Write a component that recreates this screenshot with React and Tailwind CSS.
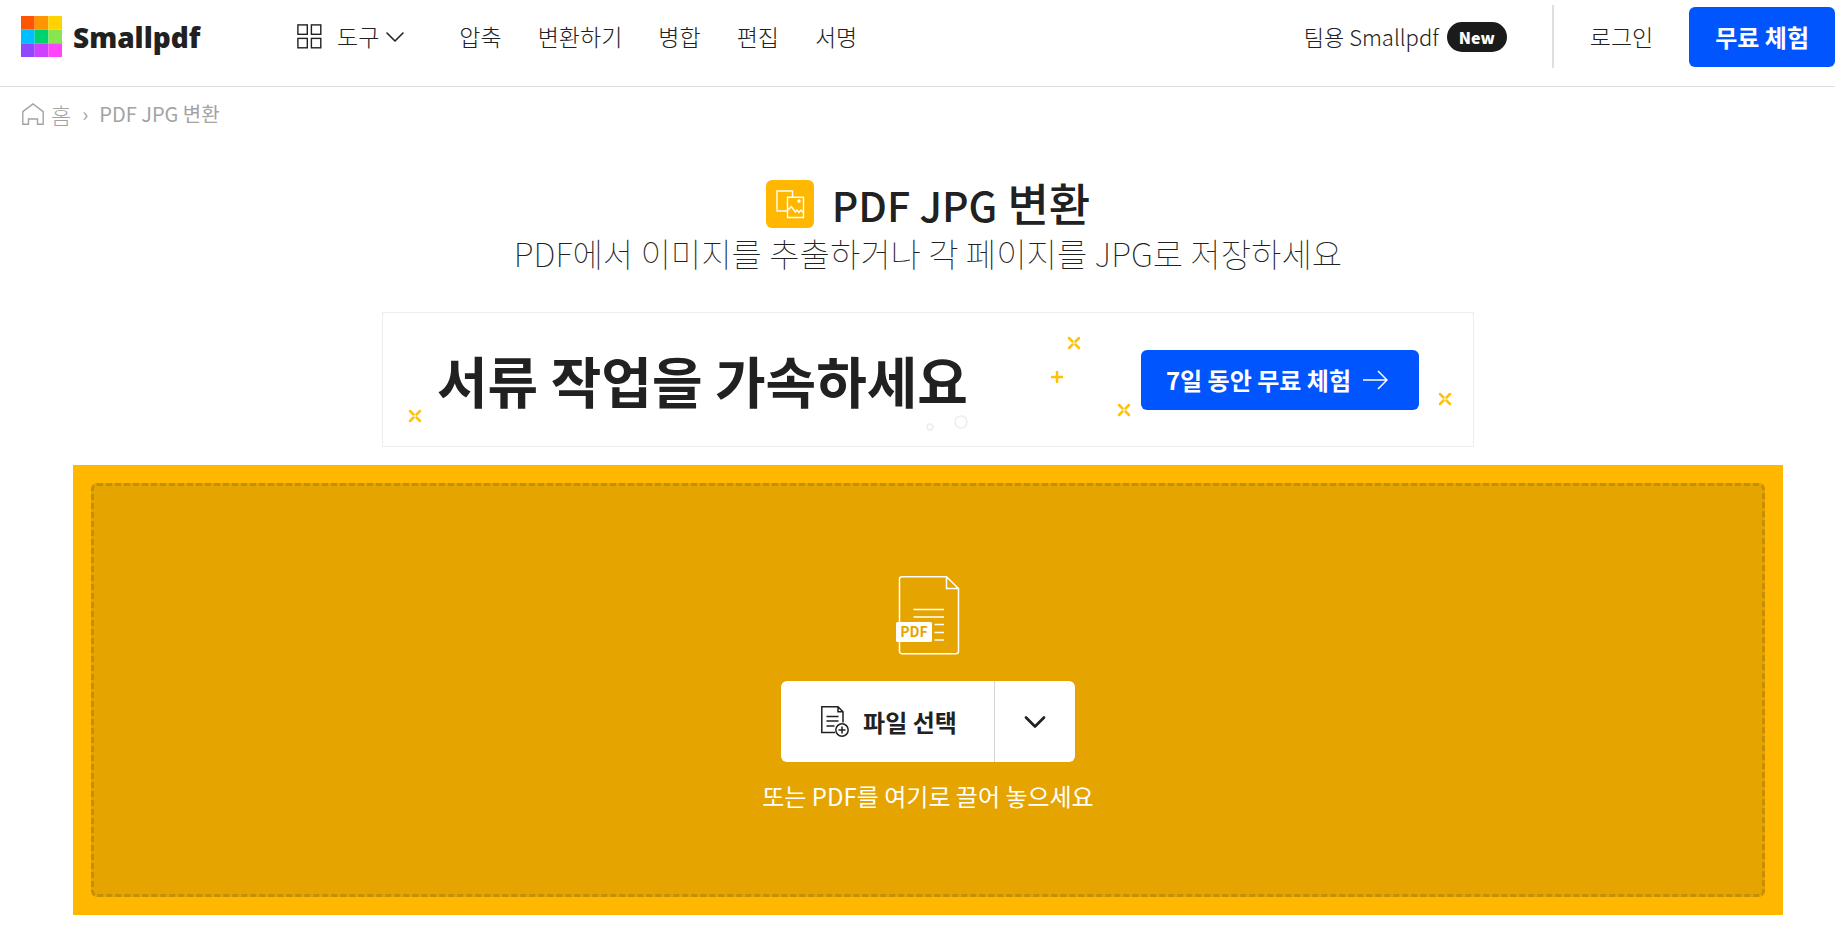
import { ChevronDown } from 'lucide-react';

const NAV_LINKS = ['압축', '변환하기', '병합', '편집', '서명'];

const LOGO_TILES = [
  ['#ff5500', '#ff9500', '#ffd200'],
  ['#00beff', '#00d26e', '#87e650'],
  ['#9146ff', '#cd41ff', '#ff46fa'],
];

// sparkles around the promo banner, in banner coordinates
const SPARKS = [
  { x: 32, y: 103 },
  { x: 691, y: 30 },
  { x: 741, y: 97 },
  { x: 1062, y: 86 },
];

function Logo() {
  return (
    <a href="#" className="flex w-[276px] shrink-0 items-center gap-[11px]">
      <svg width="41" height="41" viewBox="0 0 42 42" aria-hidden="true">
        {LOGO_TILES.map((row, r) =>
          row.map((fill, c) => <rect key={fill} x={c * 14} y={r * 14} width="14" height="14" fill={fill} />)
        )}
      </svg>
      <span className="font-['Open_Sans',sans-serif] text-[28px] leading-none font-extrabold">Smallpdf</span>
    </a>
  );
}

function GridIcon() {
  return (
    <svg width="25" height="25" viewBox="0 0 25 25" fill="none" stroke="currentColor" strokeWidth="1.4" aria-hidden="true">
      <rect x="0.9" y="0.9" width="9.4" height="9.4" />
      <rect x="14.4" y="0.9" width="9.4" height="9.4" />
      <rect x="0.9" y="14.4" width="9.4" height="9.4" />
      <rect x="14.4" y="14.4" width="9.4" height="9.4" />
    </svg>
  );
}

function HomeIcon() {
  return (
    <svg width="22" height="22" viewBox="0 0 22 22" fill="none" stroke="currentColor" strokeWidth="1.4" aria-hidden="true">
      <path d="M.8 8.600 11 .9l10.200 7.700v12.600h-5.700v-5.200h-9v5.200H.8z" />
    </svg>
  );
}

function ArrowIcon() {
  return (
    <svg width="25" height="20" viewBox="0 0 25 20" fill="none" stroke="currentColor" strokeWidth="1.5" aria-hidden="true">
      <path d="M0 10h24M15 1l9 9-9 9" />
    </svg>
  );
}

function ToolIcon() {
  return (
    <svg width="48" height="48" viewBox="0 0 48 48" fill="none" stroke="#fff" strokeWidth="1.4" aria-hidden="true">
      <rect width="48" height="48" rx="6" fill="#ffb700" stroke="none" />
      <path d="M21.500 31H11V11h15.500v6M21.500 17.200h16v20.300h-16zM21.500 30.500l3.900-4 4 5.500 1.600-2 2 2.500 2-2.500 2.500 3" />
      <circle cx="33" cy="21" r="1.700" fill="#fff" stroke="none" />
    </svg>
  );
}

function PdfFileIcon() {
  return (
    <svg width="64" height="79" viewBox="0 0 64 79" fill="none" stroke="#fff" strokeWidth="1.5" aria-hidden="true">
      <path d="M50.500 .8H6A2.500 2.500 0 0 0 3.500 3.300v71.900A2.500 2.500 0 0 0 6 77.700h54a2.500 2.500 0 0 0 2.500-2.500V12.500zV12.500h12" />
      <path d="M17.500 33.500h30.500M17.500 41h30.500M38.500 48.500h9.500M38.500 56.500h9.500M38.500 64h9.500" />
      <rect x="0" y="46" width="36" height="20" rx="1.500" fill="#fff" stroke="none" />
      <text x="18" y="61" textAnchor="middle" fontSize="14" fontWeight="700" fill="#e6a400" stroke="none">PDF</text>
    </svg>
  );
}

function AddFileIcon() {
  return (
    <svg width="28" height="31" viewBox="0 0 28 31" fill="none" stroke="currentColor" strokeWidth="1.5" aria-hidden="true">
      <path d="M14 26.500H.8V.8H17l5 5v10.700M17 .8v5h5M5.500 10.500h12M5.500 15h12M5.500 20h8" />
      <circle cx="21" cy="24" r="6.200" />
      <path d="M21 20.500v7M17.500 24h7" />
    </svg>
  );
}

function Header() {
  return (
    <header className="flex items-start justify-between border-b border-[#dfdfdf] pb-[13px] pl-[21px]">
      <div className="flex h-[73px] items-center">
        <Logo />
        <nav className="flex items-center gap-9 text-[23px] font-light whitespace-nowrap">
          <button type="button" className="mr-3 flex items-center">
            <GridIcon />
            <span className="ml-[15px]">도구</span>
            <ChevronDown size={32} strokeWidth={1.2} />
          </button>
          {NAV_LINKS.map((label) => (
            <a key={label} href="#">{label}</a>
          ))}
        </nav>
      </div>
      <div className="flex h-[73px] items-center text-[23px] font-light whitespace-nowrap">
        <a href="#" className="flex items-center gap-2 text-[22px]">
          팀용 Smallpdf
          <span className="rounded-full bg-[#1b1b1b] px-3 py-[3px] text-base leading-6 font-black text-white">New</span>
        </a>
        <span className="mr-9 ml-[45px] h-[63px] w-0.5 bg-[#dfdfdf]" />
        <a href="#">로그인</a>
        <a href="#" className="ml-9 rounded-md bg-[#0055ff] px-[26px] py-[15px] text-2xl leading-[30px] font-bold text-white">무료 체험</a>
      </div>
    </header>
  );
}

function Breadcrumbs() {
  return (
    <nav aria-label="breadcrumb" className="flex items-center pt-3 pl-[22px] text-xl leading-[30px] text-[#a3a3a3]">
      <a href="#" className="flex items-center gap-[7px] text-[22px] font-light">
        <HomeIcon />
        홈
      </a>
      <span className="mx-[11px]">›</span>
      <span>PDF JPG 변환</span>
    </nav>
  );
}

function PromoBanner() {
  return (
    <section className="relative flex h-[135px] w-full max-w-[1092px] items-center justify-between border border-[#ededed] px-[54px]">
      <h2 className="text-[55px] leading-none font-bold whitespace-nowrap">서류 작업을 가속하세요</h2>
      <a href="#" className="flex items-center gap-3 rounded-md bg-[#0055ff] pr-[31px] pl-[25px] text-2xl leading-[60px] font-bold whitespace-nowrap text-white">
        7일 동안 무료 체험
        <ArrowIcon />
      </a>
      <svg className="pointer-events-none absolute inset-0" width="1090" height="133" fill="none" aria-hidden="true">
        {SPARKS.map(({ x, y }) => (
          <path
            key={x}
            d={`M${x - 5} ${y - 5}l3.500 3.500M${x + 5} ${y - 5}l-3.500 3.500M${x - 5} ${y + 5}l3.500-3.500M${x + 5} ${y + 5}l-3.500-3.500`}
            stroke="#ffc107"
            strokeWidth="2.5"
            strokeLinecap="round"
          />
        ))}
        <path d="M674 58v12M668 64h12" stroke="#ffc107" strokeWidth="2.5" />
        <circle cx="547" cy="114" r="3" stroke="#ededed" strokeWidth="1.5" />
        <circle cx="578" cy="109" r="6" stroke="#ededed" strokeWidth="1.5" />
      </svg>
    </section>
  );
}

function DropZone() {
  return (
    <section className="mt-[18px] w-full bg-[#ffb700] p-[18px]">
      <div className="flex h-[414px] flex-col items-center rounded-md border-3 border-dashed border-[#c48e07] bg-[#e6a400] pt-[90px]">
        <PdfFileIcon />
        <div className="mt-[26px] flex h-[81px] rounded-md bg-white">
          <button type="button" className="flex items-center gap-[14px] pr-[37px] pl-10 text-2xl font-bold">
            <AddFileIcon />
            파일 선택
          </button>
          <button type="button" aria-label="파일 선택" className="flex w-[81px] items-center justify-center border-l border-[#d5d5d5]">
            <ChevronDown size={36} strokeWidth={1.8} />
          </button>
        </div>
        <p className="mt-4 text-2xl leading-9 text-white">또는 PDF를 여기로 끌어 놓으세요</p>
      </div>
    </section>
  );
}

export default function App() {
  return (
    <div className="min-h-screen bg-white font-['Noto_Sans_CJK_KR',sans-serif] text-[#212121]">
      <Header />
      <Breadcrumbs />
      <main className="flex flex-col items-center pt-[45px] pr-[52px] pb-8 pl-[73px]">
        <div className="flex items-center gap-[18px]">
          <ToolIcon />
          <h1 className="text-[45px] leading-[58px] font-medium">
            <span className="text-[41px]">PDF JPG</span> 변환
          </h1>
        </div>
        <p className="mb-[39px] text-[33px] leading-10 font-thin">PDF에서 이미지를 추출하거나 각 페이지를 JPG로 저장하세요</p>
        <PromoBanner />
        <DropZone />
      </main>
    </div>
  );
}
